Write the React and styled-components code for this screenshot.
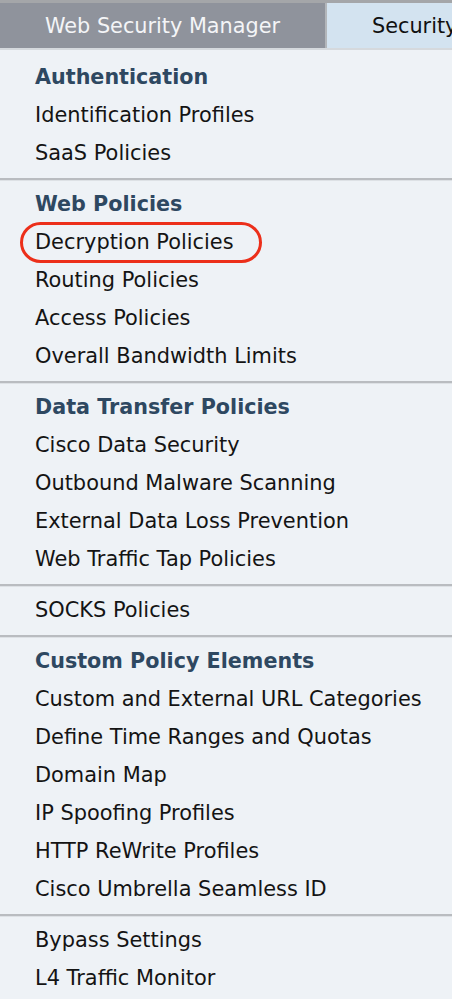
import React from "react";
import styled, { createGlobalStyle } from "styled-components";

const Global = createGlobalStyle`
  html, body { margin: 0; padding: 0; background: #eef2f6; }
  body { font-family: "DejaVu Sans", Verdana, sans-serif; }
`;

const Page = styled.div`
  width: 452px;
  min-height: 999px;
  background: #eef2f6;
  overflow: hidden;
`;

const TabBar = styled.div`
  display: flex;
  border-top: 3px solid #a4a6a9;
  border-bottom: 2px solid #d5d9dd;
  height: 45px;
`;

const Tab = styled.div`
  flex: ${(p) => (p.$active ? "0 0 325px" : "1 1 auto")};
  display: flex;
  align-items: center;
  justify-content: ${(p) => (p.$active ? "center" : "flex-start")};
  padding-left: ${(p) => (p.$active ? "0" : "45px")};
  background: ${(p) => (p.$active ? "#8f939c" : "#d3e3f0")};
  color: ${(p) => (p.$active ? "#f4f5f7" : "#111")};
  border-right: ${(p) => (p.$active ? "2px solid #b3b6ba" : "none")};
  font-size: 20.8px;
  white-space: nowrap;
  overflow: hidden;
`;

const Menu = styled.div`
  padding-top: 8px;
`;

const Section = styled.div`
  padding: 0 0 6px 35px;
  & + & {
    border-top: 2px solid #b9bcc0;
    box-shadow: inset 0 1px 0 #dde1e5;
    padding-top: 5px;
  }
`;

const Header = styled.div`
  height: 38px;
  line-height: 38px;
  font-size: 20.7px;
  font-weight: bold;
  color: #2e4861;
  white-space: nowrap;
`;

const Item = styled.div`
  position: relative;
  height: 38px;
  line-height: 38px;
  font-size: 20.9px;
  color: #141414;
  white-space: nowrap;
`;

const Highlight = styled.span`
  position: absolute;
  left: -15px;
  top: -1px;
  width: 242px;
  height: 41px;
  box-sizing: border-box;
  border: 3px solid #ec2f1a;
  border-radius: 21px;
  pointer-events: none;
`;

const sections = [
  {
    title: "Authentication",
    items: ["Identification Profiles", "SaaS Policies"],
  },
  {
    title: "Web Policies",
    items: [
      "Decryption Policies",
      "Routing Policies",
      "Access Policies",
      "Overall Bandwidth Limits",
    ],
  },
  {
    title: "Data Transfer Policies",
    items: [
      "Cisco Data Security",
      "Outbound Malware Scanning",
      "External Data Loss Prevention",
      "Web Traffic Tap Policies",
    ],
  },
  { items: ["SOCKS Policies"] },
  {
    title: "Custom Policy Elements",
    items: [
      "Custom and External URL Categories",
      "Define Time Ranges and Quotas",
      "Domain Map",
      "IP Spoofing Profiles",
      "HTTP ReWrite Profiles",
      "Cisco Umbrella Seamless ID",
    ],
  },
  { items: ["Bypass Settings", "L4 Traffic Monitor"] },
];

export default function App() {
  return (
    <Page>
      <Global />
      <TabBar>
        <Tab $active>Web Security Manager</Tab>
        <Tab>Security Services</Tab>
      </TabBar>
      <Menu>
        {sections.map((s, i) => (
          <Section key={i}>
            {s.title && <Header>{s.title}</Header>}
            {s.items.map((it) => (
              <Item key={it}>
                {it === "Decryption Policies" && <Highlight />}
                {it}
              </Item>
            ))}
          </Section>
        ))}
      </Menu>
    </Page>
  );
}
